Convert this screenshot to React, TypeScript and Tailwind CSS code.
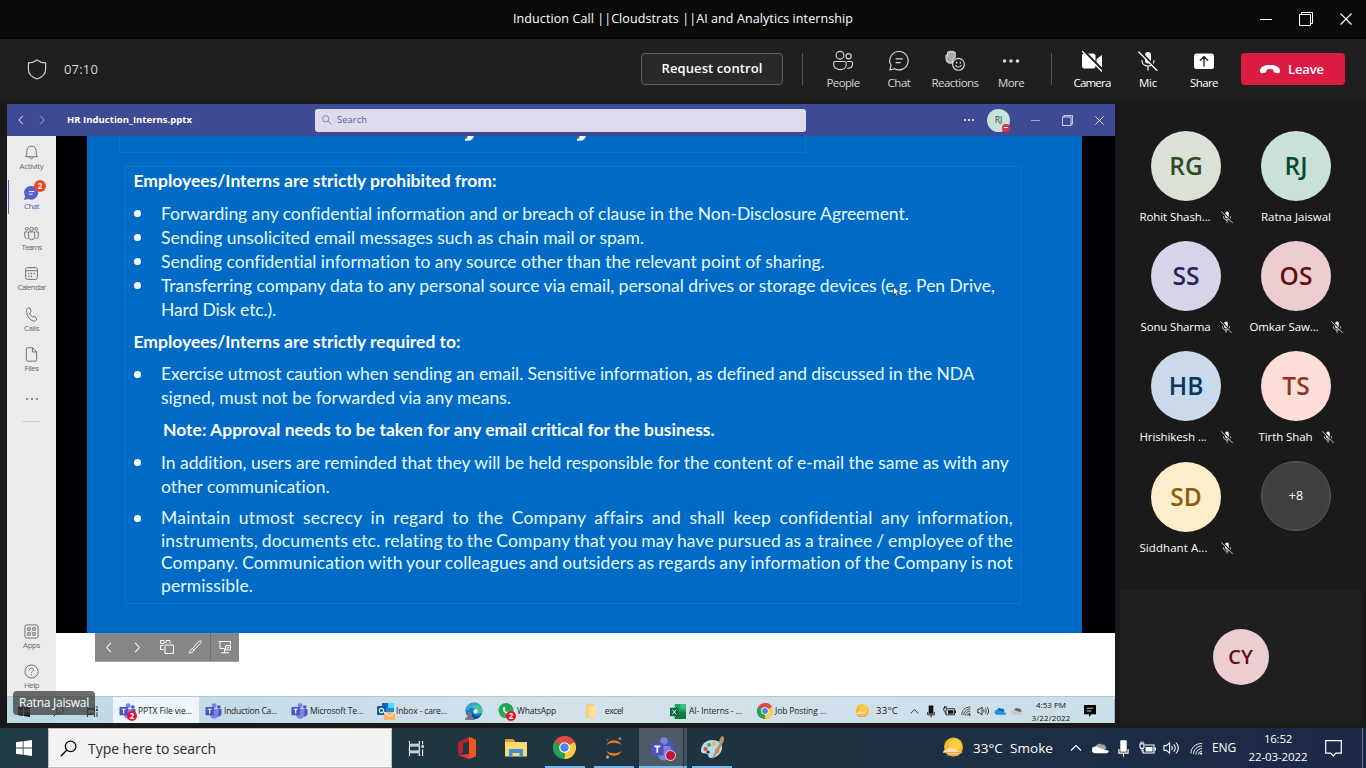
import React, { useLayoutEffect, useRef, useState } from "react";

type FitProps = { w: number; children: string; className?: string; track?: number };

/** One line of text spread to a given width, by letter spacing, or by word spacing when `track` is set. */
function Fit({ w, children, className = "", track }: FitProps) {
  const ref = useRef<HTMLSpanElement>(null);
  const [gap, setGap] = useState(0);
  useLayoutEffect(() => {
    const el = ref.current;
    if (!el) return;
    const natural = el.getBoundingClientRect().width;
    const n = track === undefined ? children.length : children.split(" ").length - 1;
    setGap((w - natural) / Math.max(1, n));
  }, []);
  const style: React.CSSProperties =
    track === undefined ? { letterSpacing: gap } : { letterSpacing: track, wordSpacing: gap };
  return (
    <span ref={ref} style={style} className={"inline-block whitespace-pre shrink-0 " + className}>
      {children}
    </span>
  );
}

/* ---------- small icons ---------- */
const Chevron = ({ dir, className = "" }: { dir: "l" | "r" | "u"; className?: string }) => (
  <svg viewBox="0 0 12 12" className={className} fill="none" stroke="currentColor" strokeWidth="1.1">
    <path d={dir === "l" ? "M8 1 3.5 6 8 11" : dir === "r" ? "M4 1l4.500 5L4 11" : "M1 8.500l5-5 5 5"} />
  </svg>
);

const MicOff = ({ className = "" }: { className?: string }) => (
  <svg viewBox="0 0 20 20" className={className} fill="none" stroke="currentColor" strokeWidth="1.2" strokeLinecap="round">
    <rect x="7" y="1" width="6" height="11.500" rx="3" fill="currentColor" stroke="none" />
    <path d="M4 9.500c0 3.500 2.700 5.500 6 5.500s6-2 6-5.500M10 15v4" />
    <path d="M2 .5 19.500 18.500" stroke="#1f1f1f" strokeWidth="2.400" />
    <path d="M.8 1 19 19.500" />
  </svg>
);

const Mag = ({ className = "" }: { className?: string }) => (
  <svg viewBox="0 0 16 16" className={className} fill="none" stroke="currentColor" strokeWidth="1.200">
    <circle cx="10" cy="6" r="5" />
    <path d="M6.300 9.700.7 15.300" />
  </svg>
);

const WinLogo = ({ className = "" }: { className?: string }) => (
  <svg viewBox="0 0 16 16" className={className} fill="currentColor">
    <path d="M0 2.300 6.700 1.300v6.300H0zM7.500 1.200 16 0v7.600H7.500zM0 8.400h6.700v6.400L0 13.800zM7.500 8.400H16V16l-8.500-1.200z" />
  </svg>
);

const TaskView = ({ className = "" }: { className?: string }) => (
  <svg viewBox="0 0 17 16" className={className} fill="none" stroke="currentColor" strokeWidth="1.200">
    <path d="M1 0v3.500h10.500V0M1 16v-3.500h10.500V16M1 5.200h10.500v5.600H1zM15 0v3.500M15 9v7" />
    <path d="M13.800 4.600h2.400v2.600h-2.400z" fill="currentColor" stroke="none" />
  </svg>
);

const TeamsLogo = ({ className = "" }: { className?: string }) => (
  <svg viewBox="0 0 24 24" className={className}>
    <circle cx="20" cy="6" r="2.700" fill="#4b53bc" />
    <circle cx="13" cy="4" r="3.700" fill="#7b83eb" />
    <path d="M15 9h8a1 1 0 0 1 1 1v6a4.500 4.500 0 0 1-7 3.500z" fill="#4b53bc" />
    <path d="M6 9h12.500a1 1 0 0 1 1 1v7a6.500 6.500 0 0 1-13 0z" fill="#7b83eb" />
    <rect x="0" y="6" width="12.500" height="12.500" rx="1" fill="#4b53bc" />
    <path d="M3.300 9.300h6M6.300 9.300v6.500" stroke="#fff" strokeWidth="1.700" />
  </svg>
);

const Chrome = ({ className = "" }: { className?: string }) => (
  <svg viewBox="0 0 24 24" className={className}>
    <path d="M12 12 1.600 6A12 12 0 0 1 22.400 6z" fill="#dd4b3e" />
    <path d="M12 12 22.400 6A12 12 0 0 1 12 24z" fill="#fccb41" />
    <path d="M12 12v12A12 12 0 0 1 1.600 6z" fill="#2aa150" />
    <path d="M12 6.500h10.600A12 12 0 0 0 12 0z" fill="#dd4b3e" />
    <path d="m7.200 14.800-5.300-9.200A12 12 0 0 0 6 22.400z" fill="#2aa150" />
    <path d="m16.800 14.700-5.300 9.300a12 12 0 0 0 9-3.500z" fill="#fccb41" />
    <circle cx="12" cy="12" r="5.600" fill="#fff" />
    <circle cx="12" cy="12" r="4.400" fill="#4a86ee" />
  </svg>
);

const Sun = ({ className = "" }: { className?: string }) => (
  <svg viewBox="0 0 22 22" className={className}>
    <circle cx="11.500" cy="10" r="9.500" fill="#fbb72c" />
    <circle cx="13" cy="8" r="6" fill="#fdcd3f" />
    <path d="M1 15.500c0-2 2-2.500 3.500-2.200.8-3 5-3.500 6.500-1.200 2-.9 4.500.2 4.500 2.200 2 0 4 .4 5 1.400-4 1.600-16 1.300-19.500-.2z" fill="#f7ddb4" />
    <path d="M1 15.500h19M5 18h12" stroke="#dca45e" strokeWidth="1" />
  </svg>
);

const Cloud = ({ className = "", back = "#bbb" }: { className?: string; back?: string }) => (
  <svg viewBox="0 0 18 12" className={className}>
    <path d="M3 8C3 3 7 0 10.500 2.500 13 2 15 4 15 7z" fill={back} />
    <path d="M3.500 11.500a3.500 3.500 0 0 1 0-7c1.500-.3 2.500.3 4 1.300L17.500 9c.5 1.200-.5 2.500-2 2.500z" fill="currentColor" />
  </svg>
);

const MicSolid = ({ className = "" }: { className?: string }) => (
  <svg viewBox="0 0 12 18" className={className} fill="none" stroke="currentColor">
    <rect x="2.500" y="0" width="7" height="12.500" rx="1" fill="currentColor" stroke="none" />
    <path d="M1 9.500v4.500h10V9.500M6 14v4" strokeWidth="1.300" />
  </svg>
);

const Battery = ({ className = "" }: { className?: string }) => (
  <svg viewBox="0 0 17 13" className={className} fill="none" stroke="currentColor" strokeWidth="1.100">
    <path d="M6 3.500h9v8H4V8" />
    <path d="M6.500 5.500H13.500v4.500H6.500zM15.500 6H17v3h-1.500z" fill="currentColor" stroke="none" />
    <path d="M1 2.500h4v2.500a2 2 0 0 1-4 0zM2 0v2.500M4 0v2.500M3 7v3" />
  </svg>
);

const Speaker = ({ className = "" }: { className?: string }) => (
  <svg viewBox="0 0 18 14" className={className} fill="none" stroke="currentColor" strokeWidth="1.100">
    <path d="M1 4.500h2.500L7 1.500v11l-3.500-3H1zM9 5c1 1.200 1 2.800 0 4M11.300 3.200c2 2.200 2 5.400 0 7.600M13.700 1.200c3.200 3.500 3.200 8 0 11.600" />
  </svg>
);

const Wifi = ({ className = "" }: { className?: string }) => (
  <svg viewBox="0 0 14 14" className={className} fill="none" stroke="currentColor" strokeWidth="1">
    <path d="M1 12.500C1 6 6 1.500 13 1.500M3.800 13c0-5 4-8.700 9.200-8.700M6.500 13.500c0-4 2.500-6.300 6.500-6.300" />
    <path d="M9.300 13.500c0-2.500 1.500-3.500 3.700-3.500" />
    <circle cx="12" cy="12.500" r="1.200" fill="currentColor" stroke="none" />
  </svg>
);

const Restore = ({ className = "" }: { className?: string }) => (
  <svg viewBox="0 0 14 14" className={className} fill="none" stroke="currentColor" strokeWidth="1">
    <path d="M.5 2.500h11v11H.5zM2.500 2.500v-2h11v11h-2" />
  </svg>
);

const Cross = ({ className = "" }: { className?: string }) => (
  <svg viewBox="0 0 12 12" className={className} stroke="currentColor" strokeWidth="1.100">
    <path d="M.5.5l11 11M11.500.5l-11 11" />
  </svg>
);

/* ---------- meeting toolbar ---------- */
const toolIcons: Record<string, React.ReactNode> = {
  People: (
    <g>
      <circle cx="7" cy="4.200" r="3.900" />
      <circle cx="15.600" cy="5.200" r="2.600" />
      <path d="M2 10.500h9.800c.8 0 1.400.6 1.400 1.400v1.800c0 3-2.700 4.900-6 4.900s-6.500-1.900-6.500-4.900v-1.800c0-.8.500-1.400 1.300-1.400zM14.500 10.500h3.600c.8 0 1.400.6 1.400 1.400v1c0 2.800-2 4.300-5 4.300" />
    </g>
  ),
  Chat: (
    <g>
      <path d="M10.300.5a9.200 9.200 0 1 1-4.700 17.300L.8 19l1.200-4.700A9.200 9.200 0 0 1 10.300.5z" />
      <path d="M7 7.800h6.500M7 11.600h4.300" />
    </g>
  ),
  Reactions: (
    <g>
      <path d="M1 4.500c.6-.6 1.500-.2 1.500.6V2.500C2.500.3 4.100.3 4.300 1.500c0-2 2-2 2.200-.3.300-1.200 2-1 2 .4.300-1 1.700-.7 1.700.4v4.200c-2 1.200-3 3.300-2.600 5.600C3 13.500 1 10 1 7z" fill="#a9a9a9" />
      <circle cx="13.500" cy="13.300" r="5.900" />
      <path d="M10.800 14.500c1 2 4.400 2 5.400 0" />
      <path d="M11.700 11v1.200M15.300 11v1.200" />
    </g>
  ),
  More: (
    <g fill="currentColor" stroke="none">
      <circle cx="3.500" cy="10" r="1.800" />
      <circle cx="10" cy="10" r="1.800" />
      <circle cx="16.500" cy="10" r="1.800" />
    </g>
  ),
  Camera: (
    <g>
      <rect x="0" y="2.500" width="13.500" height="15" rx="2.500" fill="currentColor" stroke="none" />
      <path d="M14.500 8 20 4v12.500l-5.500-4z" fill="currentColor" stroke="none" />
      <path d="M1.500 0 20.500 19" stroke="#1f1f1f" strokeWidth="2.600" />
      <path d="M.5.500 19.500 20" strokeWidth="1.300" />
    </g>
  ),
  Share: (
    <g>
      <rect x="0" y="2.500" width="20" height="15.500" rx="2.500" fill="currentColor" stroke="none" />
      <path d="M10 15V6M6.300 9.300 10 5.500l3.700 3.800" stroke="#1f1f1f" strokeWidth="1.300" />
    </g>
  ),
};

function Tool({ name, w, text, bright }: { name: string; w: string; text: number; bright?: boolean }) {
  return (
    <div className={`${w} ${bright ? "text-white" : "text-[#d6d6d6]"} flex flex-col items-center pt-[12px]`}>
      {name === "Mic" ? (
        <MicOff className="h-[20px] w-[20px]" />
      ) : (
        <svg viewBox="0 0 20 20" className="h-[20px] w-[20px] overflow-visible" fill="none" stroke="currentColor" strokeWidth="1.150" strokeLinecap="round" strokeLinejoin="round">
          {toolIcons[name]}
        </svg>
      )}
      <Fit w={text} className="mt-[4px] text-[11.500px] leading-[16px]">{name}</Fit>
    </div>
  );
}

/* ---------- shared window sidebar ---------- */
const railIcons: Record<string, React.ReactNode> = {
  Activity: <path d="M8 1.200c3 0 5 2.200 5 5v3.500l1.300 2.800H1.700L3 9.700V6.200c0-2.800 2-5 5-5zM6 12.800c.3 2.400 3.700 2.400 4 0" />,
  Teams: (
    <g>
      <circle cx="8" cy="3.300" r="1.900" /><circle cx="3" cy="3" r="1.500" /><circle cx="13" cy="3" r="1.500" />
      <path d="M4.700 6.300h6.600v5a3.300 3.300 0 0 1-6.600 0zM3.500 6.300H.8v4.200c0 2 1.200 3 3 3M12.500 6.300h2.700v4.200c0 2-1.200 3-3 3" />
    </g>
  ),
  Calendar: (
    <g>
      <rect x="1.700" y="1.700" width="12.600" height="12.600" rx="2" /><path d="M1.700 5h12.600" />
      <path d="M4.500 8h1.200M7.400 8h1.200M10.300 8h1.200M4.500 11h1.200M7.400 11h1.200" strokeWidth="1.500" />
    </g>
  ),
  Calls: <path d="M4 1.300 6 .8l1.800 4L6 6.500c.4 1.600 1.500 3 3 4l2-.8 2.700 3-1.300 2c-1.200 1-3.600.3-5.900-1.800C3.700 10.300 2.500 6.300 2.700 3.400 2.800 2.300 3 1.600 4 1.300z" />,
  Files: <path d="M3.500.8h5.700l4.300 4.300v8.600c0 .8-.5 1.400-1.300 1.400H3.800c-.8 0-1.300-.6-1.300-1.400V2C2.500 1.200 3 .8 3.500.8zM9 .8v4.400h4.500" />,
  Apps: (
    <g>
      <rect x="1" y="1" width="14" height="14" rx="2" />
      <path d="M4 4h2.700v2.700H4zM9.300 4H12v2.700H9.300zM4 9.300h2.700V12H4zM9.300 9.300H12V12H9.300z" />
    </g>
  ),
  Help: (
    <g>
      <circle cx="8" cy="8" r="7" /><path d="M6 6.300c0-2.600 4-2.600 4 0 0 1.500-2 1.700-2 3.300M8 11v1.200" />
    </g>
  ),
};

function Rail({ name, text, h = "h-[40.4px]" }: { name: string; text: number; h?: string }) {
  return (
    <div className={`${h} flex flex-col items-center text-[#6b6b6b]`}>
      <svg viewBox="0 0 16 16" className="h-[15px] w-[15px]" fill="none" stroke="currentColor" strokeWidth="1">
        {railIcons[name]}
      </svg>
      <Fit w={text} className="text-[8px] leading-[11px]">{name}</Fit>
    </div>
  );
}

/* ---------- slide ---------- */
type Line = { t: string; w: number; kind: "head" | "bullet" | "cont" | "note"; top: string; track?: number };
const lines: Line[] = [
  { t: "Employees/Interns are strictly prohibited from:", w: 363, kind: "head", top: "h-[24px]" },
  { t: "Forwarding any confidential information and or breach of clause in the Non-Disclosure Agreement.", w: 748, kind: "bullet", top: "mt-[9px] h-[24px]" },
  { t: "Sending unsolicited email messages such as chain mail or spam.", w: 483, kind: "bullet", top: "h-[24px]" },
  { t: "Sending confidential information to any source other than the relevant point of sharing.", w: 664, kind: "bullet", top: "h-[24px]" },
  { t: "Transferring company data to any personal source via email, personal drives or storage devices (e.g. Pen Drive,", w: 834, kind: "bullet", top: "h-[24px]" },
  { t: "Hard Disk etc.).", w: 115, kind: "cont", top: "h-[24px]" },
  { t: "Employees/Interns are strictly required to:", w: 327, kind: "head", top: "mt-[8px] h-[24px]" },
  { t: "Exercise utmost caution when sending an email. Sensitive information, as defined and discussed in the NDA", w: 814, kind: "bullet", top: "mt-[8.5px] h-[24px]" },
  { t: "signed, must not be forwarded via any means.", w: 350, kind: "cont", top: "h-[24px]" },
  { t: "Note: Approval needs to be taken for any email critical for the business.", w: 552, kind: "note", top: "mt-[8px] h-[24px]" },
  { t: "In addition, users are reminded that they will be held responsible for the content of e-mail the same as with any", w: 848, kind: "bullet", top: "mt-[8.5px] h-[24px]" },
  { t: "other communication.", w: 169, kind: "cont", top: "h-[24px]" },
  { t: "Maintain utmost secrecy in regard to the Company affairs and shall keep confidential any information,", w: 852, kind: "bullet", top: "mt-[8.5px] h-[22.5px]", track: 0.25 },
  { t: "instruments, documents etc. relating to the Company that you may have pursued as a trainee / employee of the", w: 852, kind: "cont", top: "h-[22.5px]", track: 0.16 },
  { t: "Company. Communication with your colleagues and outsiders as regards any information of the Company is not", w: 852, kind: "cont", top: "h-[22.5px]", track: 0.1 },
  { t: "permissible.", w: 92, kind: "cont", top: "h-[22.5px]" },
];

function SlideLine({ l }: { l: Line }) {
  return (
    <div className={`${l.top} flex items-center pl-[7.5px]`}>
      {l.kind !== "head" && (
        <span className={`${l.kind === "note" ? "w-[29.5px]" : "w-[27.5px]"} flex shrink-0`}>
          {l.kind === "bullet" && <span className="h-[7px] w-[7px] rounded-full bg-white" />}
        </span>
      )}
      <Fit w={l.w} track={l.track} className={l.kind === "head" || l.kind === "note" ? "font-bold text-white" : "text-[#e6fbff]"}>
        {l.t}
      </Fit>
    </div>
  );
}

/* ---------- participants ---------- */
const people = [
  { i: "RG", n: "Rohit Shash...", w: 71, c: "bg-[#dae2d8] text-[#33472a]", muted: true },
  { i: "RJ", n: "Ratna Jaiswal", w: 70, c: "bg-[#cae1d7] text-[#054b34]", muted: false },
  { i: "SS", n: "Sonu Sharma", w: 70, c: "bg-[#d6d4e8] text-[#28225c]", muted: true },
  { i: "OS", n: "Omkar Saw...", w: 69, c: "bg-[#eccdd0] text-[#5f0f17]", muted: true },
  { i: "HB", n: "Hrishikesh ...", w: 67, c: "bg-[#cadaea] text-[#04385f]", muted: true },
  { i: "TS", n: "Tirth Shah", w: 54, c: "bg-[#fdddd7] text-[#8f3527]", muted: true },
  { i: "SD", n: "Siddhant A...", w: 68, c: "bg-[#ffeecb] text-[#8a5c08]", muted: true },
];

/* ---------- shared desktop taskbar ---------- */
function SharedApp({ w, icon, label, lw, active }: { w: string; icon: React.ReactNode; label?: string; lw?: number; active?: boolean }) {
  return (
    <div className={`${w} ${active ? "bg-[#edf5fa]" : ""} flex h-full shrink-0 items-center pt-[2px] pl-[6px]`}>
      <span className="relative mr-[2px] flex h-[18px] w-[17px] shrink-0 items-center justify-center">{icon}</span>
      {label && <Fit w={lw || 50} className="text-[8.5px] leading-[12px] text-[#1b2328]">{label}</Fit>}
    </div>
  );
}

const Badge = () => (
  <span className="absolute right-[-1px] bottom-[-1px] flex h-[10px] w-[10px] items-center justify-center rounded-full bg-[#e8112d] text-[8px] leading-none font-bold text-white">2</span>
);

export default function App() {
  return (
    <div className="flex h-[768px] w-[1366px] flex-col overflow-hidden bg-[#1a1a1a] font-['Open_Sans','Noto_Sans',sans-serif] text-white [&_svg]:shrink-0">
      {/* title bar */}
      <div className="flex h-[39px] shrink-0 items-center border-b border-black bg-[#0a0a0a]">
        <div className="w-[513px]" />
        <Fit w={340} className="text-[12.500px]">Induction Call ||Cloudstrats ||AI and Analytics internship</Fit>
        <div className="ml-auto flex items-center pr-[14px]">
          <span className="mr-[27px] h-px w-[12px] bg-white" />
          <Restore className="mr-[27px] h-[14px] w-[14px]" />
          <Cross className="h-[12px] w-[12px]" />
        </div>
      </div>

      {/* meeting toolbar */}
      <div className="flex h-[60px] shrink-0 bg-[#1f1f1f]">
        <div className="flex w-[641px] items-center pl-[27px]">
          <svg viewBox="0 0 20 22" className="h-[21px] w-[20px] text-[#d6d6d6]" fill="none" stroke="currentColor" strokeWidth="1.200" strokeLinejoin="round">
            <path d="M10 1c2.500 2 5.500 3 9 3v7c0 5-4 8.200-9 10-5-1.800-9-5-9-10V4c3.500 0 6.500-1 9-3z" />
          </svg>
          <Fit w={34} className="mt-px ml-[17px] text-[13px] text-[#d6d6d6]">07:10</Fit>
        </div>
        <div className="mt-[14px] flex h-[32px] w-[142px] items-center justify-center rounded-[4px] border border-[#606060] bg-[#292929]">
          <Fit w={101} className="text-[13px] font-semibold">Request control</Fit>
        </div>
        <div className="mt-[14px] ml-[19px] h-[32px] w-px bg-[#555]" />
        <div className="ml-[12px] flex">
          <Tool name="People" w="w-[56px]" text={33} />
          <Tool name="Chat" w="w-[56px]" text={23} />
          <Tool name="Reactions" w="w-[56px]" text={47} />
          <Tool name="More" w="w-[56px]" text={26} />
        </div>
        <div className="mt-[14px] ml-[12px] h-[32px] w-px bg-[#555]" />
        <div className="ml-[12px] flex">
          <Tool name="Camera" w="w-[56px]" text={37} bright />
          <Tool name="Mic" w="w-[56px]" text={18} bright />
          <Tool name="Share" w="w-[56px]" text={28} bright />
        </div>
        <div className="mt-[14px] ml-[9px] flex h-[32px] w-[104px] items-center rounded-[4px] bg-[#dc1b43] pl-[19px]">
          <svg viewBox="0 0 20 9" className="h-[9px] w-[20px]" fill="white">
            <path d="M10 0c5.500 0 10 2 10 5.800 0 1.600-.6 2.700-2 2.500l-3-.5c-1-.2-1.300-.9-1.500-1.700L13.200 4.500c-2-.7-4.400-.7-6.400 0L6.500 6.100c-.2.800-.5 1.500-1.500 1.700l-3 .5C.6 8.500 0 7.400 0 5.800 0 2 4.500 0 10 0z" />
          </svg>
          <Fit w={36} className="mt-px ml-[8px] text-[13px] font-semibold">Leave</Fit>
        </div>
      </div>

      {/* stage */}
      <div className="flex h-[629px] shrink-0">
        <div className="relative mt-[5px] ml-[7px] flex h-[619px] w-[1108px] flex-col overflow-hidden">
          <div className="flex h-[32px] shrink-0 items-center bg-[#3f4a94]">
            <div className="flex w-[308px] items-center pl-[9px]">
              <Chevron dir="l" className="h-[10px] w-[10px]" />
              <Chevron dir="r" className="ml-[11px] h-[10px] w-[10px] text-[#a9aed6]" />
              <Fit w={125} className="mt-px ml-[20px] text-[9.500px] font-bold">HR Induction_Interns.pptx</Fit>
            </div>
            <div className="flex h-[23px] w-[491px] items-center rounded-[3px] bg-[#dcdcec] pl-[7px] text-[#5d5f8d]">
              <Mag className="h-[10px] w-[10px] -scale-x-100 text-[#6d6d80]" />
              <Fit w={30} className="ml-[5px] text-[9.500px]">Search</Fit>
            </div>
            <div className="ml-[158px] flex gap-[2px]">
              <span className="h-[2px] w-[2px] rounded-full bg-white" />
              <span className="h-[2px] w-[2px] rounded-full bg-white" />
              <span className="h-[2px] w-[2px] rounded-full bg-white" />
            </div>
            <div className="relative ml-[13px] flex h-[23px] w-[23px] shrink-0 items-center justify-center rounded-full bg-[#cae1d7] text-[8.500px] text-[#19543f]">
              RJ
              <span className="absolute right-0 bottom-0 flex h-[8px] w-[8px] items-center justify-center rounded-full bg-[#d6304a]">
                <span className="h-px w-[4px] bg-white" />
              </span>
            </div>
            <span className="ml-[21px] h-px w-[9px] bg-[#a3a8d0]" />
            <Restore className="ml-[22px] h-[11px] w-[11px]" />
            <Cross className="ml-[22px] h-[9px] w-[9px]" />
          </div>

          <div className="flex h-[560px] shrink-0">
            {/* rail */}
            <div className="flex w-[49px] shrink-0 flex-col bg-[#ebebeb] pt-[9px]">
              <Rail name="Activity" text={24} />
              <div className="relative flex h-[40.4px] flex-col items-center text-[#5560c8]">
                <span className="absolute top-[-5px] left-[1px] h-[34px] w-px bg-[#5560c8]" />
                <svg viewBox="0 0 16 16" className="h-[15px] w-[15px]" fill="currentColor">
                  <path d="M8.300 1A7.300 7.300 0 1 1 4.500 14.800L0 16l1.200-4A7.300 7.300 0 0 1 8.300 1z" />
                  <path d="M5.500 7h5.500M5.500 9.800h3.500" stroke="#fff" />
                </svg>
                <span className="absolute top-[-5px] left-[27px] flex h-[12px] w-[12px] items-center justify-center rounded-full bg-[#e8481f] text-[8px] leading-none font-bold text-white">2</span>
                <Fit w={15} className="text-[8px] leading-[11px]">Chat</Fit>
              </div>
              <Rail name="Teams" text={20} />
              <Rail name="Calendar" text={28} />
              <Rail name="Calls" text={15} />
              <Rail name="Files" text={14} />
              <div className="mt-[11px] flex justify-center gap-[3px]">
                <span className="h-[2px] w-[2px] rounded-full bg-[#6b6b6b]" />
                <span className="h-[2px] w-[2px] rounded-full bg-[#6b6b6b]" />
                <span className="h-[2px] w-[2px] rounded-full bg-[#6b6b6b]" />
              </div>
              <span className="mt-[21px] ml-[15px] h-px w-[18px] bg-[#cfcfcf]" />
              <div className="mt-auto" />
              <Rail name="Apps" text={17} h="h-[40.4px]" />
              <Rail name="Help" text={15} h="h-[32px]" />
            </div>

            {/* slide */}
            <div className="flex w-[1059px] flex-col bg-white">
              <div className="flex h-[497px] bg-[#010004]">
                <div className="ml-[31px] flex h-full w-[995px] flex-col bg-[#006bc7]">
                  <div className="ml-[32px] flex h-[17px] w-[687px] border-x border-b border-[#0677c6]">
                    <svg viewBox="0 0 687 17" className="h-[17px] w-[687px]" fill="white">
                      <path d="M345 0h9c-1 3-3 4.800-6 4.800h-3v-2c2 0 2.500-1 2.500-2.800z" />
                      <path d="M457 0h9c-1 3-3 4.800-6 4.800h-3v-2c2 0 2.500-1 2.500-2.800z" />
                    </svg>
                  </div>
                  <div className="mt-[12.5px] ml-[38px] h-[438px] w-[896px] border border-[#0a76cd] pt-[2px] font-['Lato',sans-serif] text-[17.500px] leading-[22px]">
                    {lines.map((l) => (
                      <SlideLine key={l.t} l={l} />
                    ))}
                  </div>
                </div>
              </div>
              <div className="ml-[39px] flex h-[29px] w-[144px] items-center border-b border-[#a0a0a0] bg-[#868686] text-white">
                <Chevron dir="l" className="ml-[8px] h-[11px] w-[12px]" />
                <Chevron dir="r" className="ml-[16px] h-[11px] w-[12px]" />
                <svg viewBox="0 0 14 14" className="ml-[17px] h-[14px] w-[14px]" fill="none" stroke="currentColor" strokeWidth="1">
                  <path d="M5 5h8.500v8.500H5zM3.500 9.500h-3v-4h3M.5 3.500v-3H4v3zM6 3.500v-3h4v3" />
                </svg>
                <svg viewBox="0 0 14 14" className="ml-[14px] h-[14px] w-[14px]" fill="none" stroke="currentColor" strokeWidth="1">
                  <path d="M13 1c-.8-.7-1.500-.3-2 .3L4.500 8.500l1.500 1.500L12.800 3c.5-.6.8-1.300.2-2zM4.500 8.500C2.500 9 3 11 1 12.800c2 .5 4.500-.5 5-2.800" />
                </svg>
                <span className="ml-[8px] h-full w-px bg-[#6e6e6e]" />
                <svg viewBox="0 0 14 14" className="ml-[7px] h-[14px] w-[14px]" fill="none" stroke="currentColor" strokeWidth="1">
                  <path d="M.5 1.500h12.500M2 1.500V8.500h4.500M6.500 9v3.500M3 12.800h8M12.500 1.500V4.500M7.500 5.500h5v4.500h-5zM9 6.700l2 2M11 6.700l-2 2" />
                </svg>
              </div>
            </div>
          </div>

          {/* shared taskbar */}
          <div className="flex h-[27px] shrink-0 items-center border-t border-[#b4c8d2] bg-linear-to-r from-[#bcd9e6] via-[#d3e2ea] to-[#cbdfe9] text-[#111]">
            <div className="flex h-full w-[106px] shrink-0 items-center pt-[2px] pl-[11px]">
              <WinLogo className="h-[12px] w-[12px]" />
              <Mag className="ml-[23px] h-[11px] w-[11px]" />
              <TaskView className="ml-[22px] h-[11px] w-[13px]" />
            </div>
            <SharedApp w="w-[86px]" active icon={<><TeamsLogo className="h-[16px] w-[17px]" /><Badge /></>} label="PPTX File vie..." lw={54} />
            <SharedApp w="w-[86px]" icon={<TeamsLogo className="h-[16px] w-[17px]" />} label="Induction Ca..." lw={53} />
            <SharedApp w="w-[86px]" icon={<TeamsLogo className="h-[16px] w-[17px]" />} label="Microsoft Te..." lw={53} />
            <SharedApp
              w="w-[88px]"
              icon={
                <svg viewBox="0 0 18 18" className="h-[18px] w-[18px]">
                  <path d="M5 1h12v12H5z" fill="#1490df" /><path d="M11 1h6v5h-6z" fill="#50d9ff" /><path d="M5 1h6v5H5z" fill="#0f6cbd" />
                  <rect x="0" y="4" width="9" height="9" rx="1" fill="#0a5ea8" /><circle cx="4.500" cy="8.500" r="2.200" fill="none" stroke="#fff" strokeWidth="1.200" />
                  <path d="M7 10h11v8H7z" fill="#fbb36a" /><path d="m7 10 5.500 4.500L18 10" stroke="#fff" fill="none" />
                </svg>
              }
              label="Inbox - care..."
              lw={51}
            />
            <SharedApp
              w="w-[33px]"
              icon={
                <svg viewBox="0 0 18 18" className="h-[18px] w-[18px]">
                  <circle cx="9" cy="9" r="8.500" fill="#1677c8" /><path d="M1 7a8.500 8.500 0 0 1 16.500 2c0 3-5 3.500-7 1.500 1.500-3-3-6-9.500-3.500z" fill="#3fc8a0" />
                  <path d="M1 7C3 0 11-1 14.500 3 9 2 5 4 4 9z" fill="#2ea5d8" />
                  <path d="M7 9c0 4 4 6 8 5a8 8 0 0 1-8 3z" fill="#0b4b92" /><circle cx="10.500" cy="9.500" r="2.200" fill="#e6f3f8" /><circle cx="4.500" cy="12" r="2.200" fill="#777" /><path d="M0 18c0-5 9-5 9 0z" fill="#777" />
                </svg>
              }
            />
            <SharedApp
              w="w-[86px]"
              icon={
                <>
                  <svg viewBox="0 0 18 18" className="h-[17px] w-[17px]"><circle cx="8.500" cy="8" r="8" fill="#1ea952" /><path d="M5 5c0 4 3 7 7 7l1-2-2.500-1.200-1 1C8.500 9.500 7.500 8.500 7 7.500l1-1L7 4z" fill="#fff" /></svg>
                  <Badge />
                </>
              }
              label="WhatsApp"
              lw={39}
            />
            <SharedApp w="w-[86px]" icon={<svg viewBox="0 0 12 14" className="mr-[4px] h-[14px] w-[12px]"><path d="M1 0h8v14H1z" fill="#f7cf77" /><path d="M4 2h7v11H4z" fill="#fbe09b" /></svg>} label=" excel" lw={20} />
            <SharedApp
              w="w-[86px]"
              icon={
                <svg viewBox="0 0 18 16" className="h-[15px] w-[17px]">
                  <path d="M5 0h12v16H5z" fill="#21a366" /><path d="M11 0h6v5h-6z" fill="#33c481" /><path d="M5 8h12v8H5z" fill="#107c41" />
                  <path d="M0 4h9v9H0z" fill="#0b6a37" /><path d="m2.500 6 4 5M6.500 6l-4 5" stroke="#fff" />
                </svg>
              }
              label="AI- Interns - ..."
              lw={53}
            />
            <SharedApp w="w-[97px]" icon={<Chrome className="h-[16px] w-[16px]" />} label="Job Posting ..." lw={51} />
            <div className="flex h-full flex-1 items-center pt-[2px]">
              <Sun className="ml-[7px] h-[15px] w-[16px]" />
              <Fit w={22} className="ml-[6px] text-[9.500px]">33°C</Fit>
              <Chevron dir="u" className="ml-[12px] h-[9px] w-[9px]" />
              <MicSolid className="ml-[8px] h-[13px] w-[8px]" />
              <Battery className="ml-[8px] h-[10px] w-[13px]" />
              <Wifi className="ml-[5px] h-[10px] w-[10px]" />
              <Speaker className="ml-[6px] h-[10px] w-[13px]" />
              <Cloud className="ml-[4px] h-[8px] w-[13px] text-[#1a8fe3]" back="#0f6cbd" />
              <Cloud className="ml-[4px] h-[8px] w-[13px] text-[#c9c6c6]" back="#686060" />
              <div className="ml-[7px] flex w-[40px] shrink-0 flex-col items-center text-[8px] leading-[13px]">
                <Fit w={30}>4:53 PM</Fit>
                <Fit w={39}>3/22/2022</Fit>
              </div>
              <svg viewBox="0 0 13 13" className="ml-[13px] h-[12px] w-[12px]"><path d="M0 0h13v10H8l-2.500 3v-3H0z" /><path d="M3 3.500h7M3 6.500h5" stroke="#cbdfe9" /></svg>
              <span className="ml-auto h-full w-px bg-[#9db1bc]" />
            </div>
          </div>

          <div className="absolute top-[587px] left-[6px] flex h-[24px] w-[82px] items-center rounded-[4px] bg-[#3c3c3c]/75 pl-[6px]">
            <Fit w={70} className="text-[12px]">Ratna Jaiswal</Fit>
          </div>
          <svg viewBox="0 0 8 12" className="absolute top-[182px] left-[886px] h-[11px] w-[7px]">
            <path d="M.5.5v9.500l2.200-2 1.500 3.500 1.600-.7L4.300 7.500h3z" fill="#fff" stroke="#111" strokeWidth=".7" />
          </svg>
        </div>

        {/* participants */}
        <div className="ml-[5px] flex w-[241px] flex-col">
          <div className="ml-[11px] grid h-[491px] w-[220px] grid-cols-2 auto-rows-[110px] content-start pt-[32px]">
            {people.map((p) => (
              <div key={p.i} className={`${p.i === "SD" ? "pt-px" : ""} flex flex-col items-center`}>
                <div className={`${p.c} flex h-[70px] w-[70px] shrink-0 items-center justify-center rounded-full text-[24.500px] font-semibold`}>{p.i}</div>
                <div className="mt-[8px] flex h-[16px] items-center text-[11.500px] leading-[16px]">
                  <span className={p.n.endsWith("...") ? "w-[72px]" : ""}><Fit w={p.w}>{p.n}</Fit></span>
                  {p.muted && <MicOff className="ml-[9px] h-[12px] w-[12px]" />}
                </div>
              </div>
            ))}
            <div className="flex justify-center">
              <div className="flex h-[70px] w-[70px] items-center justify-center rounded-full border border-[#5c5c5c] bg-[#404040] text-[12.500px]">+8</div>
            </div>
          </div>
          <div className="flex h-[133px] items-center justify-center bg-[#1f1f1f]">
            <div className="flex h-[56px] w-[56px] items-center justify-center rounded-full bg-[#eccdd0] text-[20px] font-semibold text-[#5f0f17]">CY</div>
          </div>
        </div>
      </div>

      {/* local taskbar */}
      <div className="flex h-[40px] shrink-0 bg-linear-to-r from-[#213b43] via-[#1f343f] to-[#1c2848]">
        <div className="flex w-[48px] items-center justify-center"><WinLogo className="h-[16px] w-[16px]" /></div>
        <div className="flex h-full w-[344px] items-center border border-[#bdbdbd] bg-[#f2f2f2] pl-[11px] text-[#2a2a2a]">
          <Mag className="h-[17px] w-[17px] text-black" />
          <Fit w={128} className="ml-[11px] text-[14px]">Type here to search</Fit>
        </div>
        <div className="flex w-[50px] items-center justify-center pr-[2px]"><TaskView className="h-[15px] w-[17px]" /></div>
        <div className="flex w-[49px] items-center justify-center">
          <svg viewBox="0 0 18 22" className="h-[22px] w-[18px]">
            <path d="M0 5 11 0v4L5 6.500V16l-5 2z" fill="#b8212b" /><path d="M11 0l7 2.500v17L11 22z" fill="#ea5a1f" /><path d="m0 18 11-1v5z" fill="#e8354b" />
          </svg>
        </div>
        <div className="flex w-[49px] items-center justify-center">
          <svg viewBox="0 0 22 18" className="h-[18px] w-[22px]">
            <path d="M0 0h8l2 2v4H0z" fill="#dba022" /><path d="M0 3h22v14.500H0z" fill="#fbd876" /><path d="M4 18v-6.500c0-1 .7-1.500 1.500-1.500h11c.8 0 1.500.5 1.500 1.500V18h-3.500v-4h-7v4z" fill="#3b93da" />
          </svg>
        </div>
        <div className="flex w-[49px] flex-col items-center">
          <Chrome className="mt-[8px] h-[23px] w-[23px]" />
          <span className="mt-auto h-[2px] w-[40px] bg-[#76b9ed]" />
        </div>
        <div className="flex w-[49px] flex-col items-center">
          <svg viewBox="0 0 18 22" className="mt-[9px] h-[22px] w-[18px]">
            <path d="M1.500 8C4 1.500 14 1.500 16.500 8 12 5 6 5 1.500 8zM1.500 14c2.500 6.500 12.500 6.500 15 0-4.500 3-10.500 3-15 0z" fill="#f37726" />
            <circle cx="15" cy="1.700" r="1.400" fill="#8b8b8b" /><circle cx="2.500" cy="20" r="1.700" fill="#9b9b9b" /><circle cx="2.500" cy="3" r=".8" fill="#777" />
          </svg>
          <span className="mt-auto h-[2px] w-[40px] bg-[#76b9ed]" />
        </div>
        <div className="flex w-[49px]">
          <div className="relative ml-px flex w-[44px] flex-col items-center border-b-2 border-[#76b9ed] bg-[#4c5b66]">
            <TeamsLogo className="mt-[9px] ml-[4px] h-[24px] w-[24px]" />
            <span className="absolute top-[22px] left-[26px] h-[11px] w-[11px] rounded-full border border-[#e7dbe2] bg-[#c4122f]" />
          </div>
          <div className="w-[4px] border-b-2 border-l border-b-[#76b9ed] border-l-[#27333c] bg-[#41505b]" />
        </div>
        <div className="flex w-[49px] flex-col items-center">
          <svg viewBox="0 0 24 24" className="mt-[8px] h-[24px] w-[24px]">
            <path d="M12 4c7 0 11 4 10 9-1 5-6 9-11 9-3 0-2-3-4-4s-6 0-6-3C1 9 5 4 12 4z" fill="#b7d9ee" />
            <circle cx="5.500" cy="13" r="2" fill="#d8473a" /><circle cx="9" cy="9" r="2" fill="#53a84d" /><circle cx="14" cy="7.500" r="2" fill="#f0b73c" /><circle cx="8" cy="16" r="1.600" fill="#1f343f" /><circle cx="17" cy="15" r="2" fill="#3f7fc6" />
            <path d="M12 23c1-4 5-12 8-16l2 1c-2 5-6 12-10 15z" fill="#d28b43" /><path d="M19 7c0-3 1-5 3-7l2 1c0 3 0 5-2 7z" fill="#b9936a" />
          </svg>
          <span className="mt-auto h-[2px] w-[40px] bg-[#76b9ed]" />
        </div>
        <div className="ml-auto flex items-center">
          <Sun className="h-[22px] w-[22px]" />
          <Fit w={80} className="mt-px ml-[9px] text-[13.500px]">33°C  Smoke</Fit>
          <Chevron dir="u" className="ml-[17px] h-[12px] w-[12px]" />
          <Cloud className="ml-[10px] h-[12px] w-[17px]" back="#a5a5a5" />
          <MicSolid className="ml-[9px] h-[17px] w-[11px]" />
          <Battery className="ml-[10px] h-[14px] w-[17px]" />
          <Speaker className="ml-[7px] h-[14px] w-[17px]" />
          <Wifi className="ml-[10px] h-[13px] w-[13px]" />
          <Fit w={24} className="ml-[9px] text-[12px]">ENG</Fit>
          <div className="ml-[12px] flex w-[60px] shrink-0 flex-col items-center text-[11.500px] leading-[18px]">
            <Fit w={28}>16:52</Fit>
            <Fit w={59}>22-03-2022</Fit>
          </div>
          <svg viewBox="0 0 17 17" className="ml-[17px] h-[17px] w-[17px]" fill="none" stroke="currentColor" strokeWidth="1.200"><path d="M.7.700h15.600v12.500h-5.500L8.300 16l-2.500-2.800H.7z" /></svg>
          <span className="ml-[20px] h-[40px] w-px bg-[#6c7890]" />
          <span className="w-[3px]" />
        </div>
      </div>
    </div>
  );
}
